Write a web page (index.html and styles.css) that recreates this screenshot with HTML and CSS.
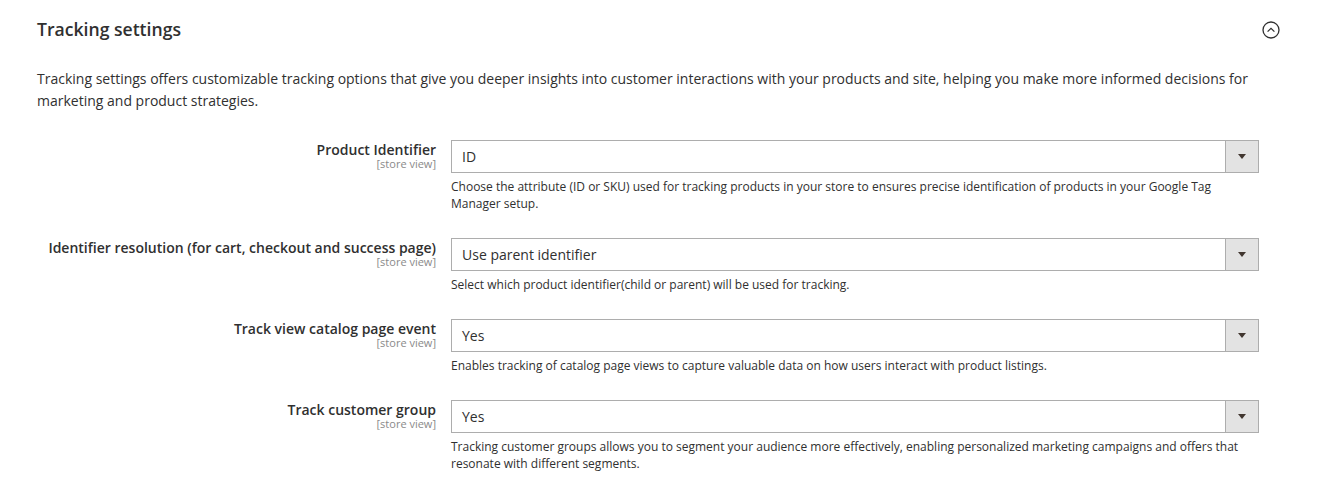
FILE: index.html
```html
<!DOCTYPE html>
<html>
<head>
<meta charset="utf-8">
<link rel="stylesheet" href="styles.css">
</head>
<body>
<section class="section">
  <div class="section-head">
    <h2 class="section-title">Tracking settings</h2>
    <button class="toggle" aria-label="Collapse">
      <svg width="18" height="18" viewBox="0 0 18 18"><circle cx="9" cy="9" r="8" fill="none" stroke="#303030" stroke-width="1.3"/><path d="M5.6 10.6 L9 7.4 L12.4 10.6" fill="none" stroke="#303030" stroke-width="1.3"/></svg>
    </button>
  </div>
  <p class="section-desc">Tracking settings offers customizable tracking options that give you deeper insights into customer interactions with your products and site, helping you make more informed decisions for marketing and product strategies.</p>

  <div class="form">
    <div class="row">
      <div class="label"><span class="label-text">Product Identifier</span><span class="scope">[store view]</span></div>
      <div class="control">
        <div class="select"><span class="value">ID</span><span class="arrow"></span></div>
        <p class="note">Choose the attribute (ID or SKU) used for tracking products in your store to ensures precise identification of products in your Google Tag Manager setup.</p>
      </div>
    </div>
    <div class="row">
      <div class="label"><span class="label-text">Identifier resolution (for cart, checkout and success page)</span><span class="scope">[store view]</span></div>
      <div class="control">
        <div class="select"><span class="value">Use parent identifier</span><span class="arrow"></span></div>
        <p class="note">Select which product identifier(child or parent) will be used for tracking.</p>
      </div>
    </div>
    <div class="row">
      <div class="label"><span class="label-text">Track view catalog page event</span><span class="scope">[store view]</span></div>
      <div class="control">
        <div class="select"><span class="value">Yes</span><span class="arrow"></span></div>
        <p class="note">Enables tracking of catalog page views to capture valuable data on how users interact with product listings.</p>
      </div>
    </div>
    <div class="row">
      <div class="label"><span class="label-text">Track customer group</span><span class="scope">[store view]</span></div>
      <div class="control">
        <div class="select"><span class="value">Yes</span><span class="arrow"></span></div>
        <p class="note">Tracking customer groups allows you to segment your audience more effectively, enabling personalized marketing campaigns and offers that resonate with different segments.</p>
      </div>
    </div>
  </div>
</section>
</body>
</html>
```

FILE: styles.css
```css
html, body {
  margin: 0;
  padding: 0;
  background: #ffffff;
}
body {
  font-family: "Open Sans", "Noto Sans", sans-serif;
  color: #303030;
}
.section {
  width: 1250px;
  padding: 0 0 0 37px;
}
.section-head {
  display: flex;
  justify-content: space-between;
  align-items: center;
  height: 58px;
}
.section-title {
  margin: 0;
  font-size: 17.6px;
  font-weight: 600;
  line-height: 22px;
  color: #303030;
}
.toggle {
  border: 0;
  background: none;
  padding: 0;
  margin-right: 7px;
  margin-top: 2px;
  display: flex;
}
.section-desc {
  margin: 10px 0 0 0;
  font-size: 14px;
  line-height: 22px;
  width: 1250px;
}
.form {
  margin-top: 28px;
  display: flex;
  flex-direction: column;
}
.row {
  display: grid;
  grid-template-columns: 399px 808px;
  column-gap: 15px;
  padding-bottom: 26px;
}
.label {
  display: flex;
  flex-direction: column;
  align-items: flex-end;
  text-align: right;
  padding-top: 2px;
}
.label-text {
  font-size: 14px;
  font-weight: 600;
  line-height: 16px;
}
.scope {
  font-size: 11px;
  line-height: 12px;
  margin-top: 0;
  color: #8a8a8a;
}
.select {
  height: 33px;
  box-sizing: border-box;
  border: 1px solid #adadad;
  display: flex;
  align-items: center;
  justify-content: space-between;
}
.value {
  padding-left: 10px;
  font-size: 14px;
}
.arrow {
  width: 33px;
  height: 31px;
  box-sizing: border-box;
  border-left: 1px solid #adadad;
  background: #e3e3e3;
  position: relative;
}
.arrow::after {
  content: "";
  position: absolute;
  left: 12px;
  top: 13px;
  border-left: 4px solid transparent;
  border-right: 4px solid transparent;
  border-top: 5px solid #41362f;
}
.note {
  margin: 5px 0 0 0;
  font-size: 12px;
  line-height: 17px;
  padding-right: 10px;
}
```
